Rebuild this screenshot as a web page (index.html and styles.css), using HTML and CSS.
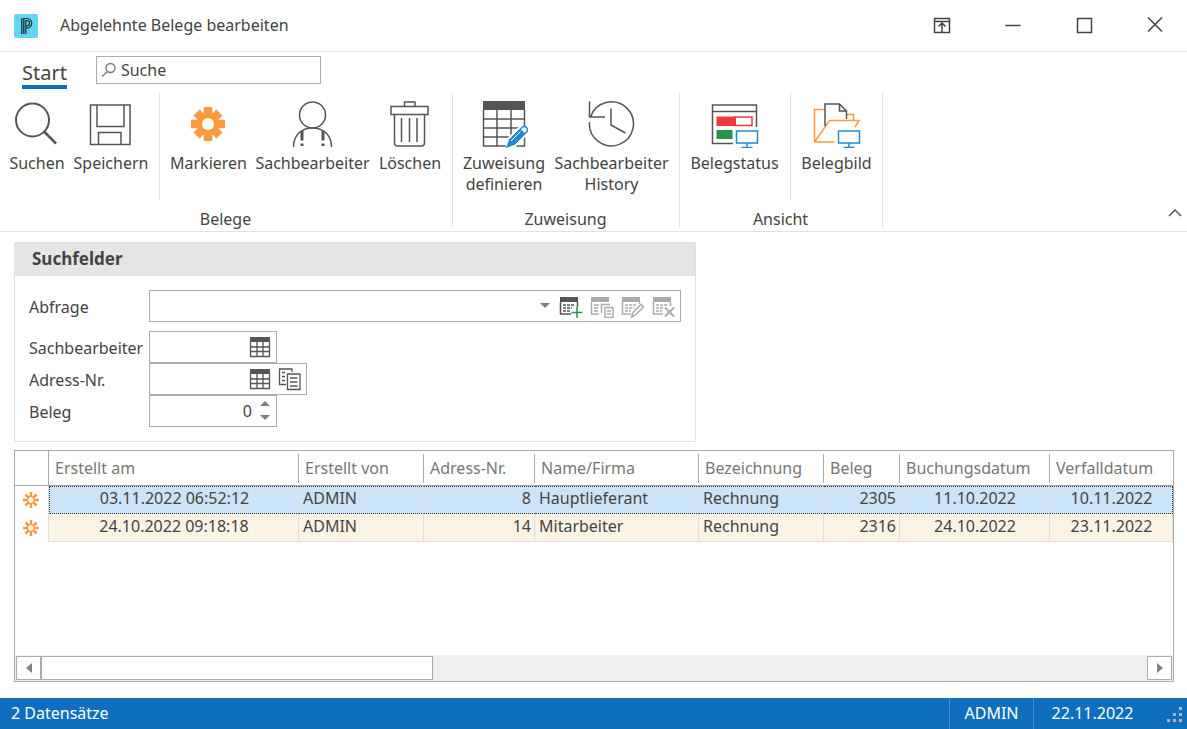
FILE: index.html
```html
<!DOCTYPE html>
<html lang="de">
<head>
    <meta charset="UTF-8">
    <meta name="viewport" content="width=device-width, initial-scale=1">
    <title>Abgelehnte Belege bearbeiten</title>
    <link rel="stylesheet" href="styles.css">
</head>
<body>
<header class="titlebar">
    <svg class="logo" viewBox="0 0 24 24">
        <rect width="24" height="24" rx="2" fill="#62d5f2"/>
        <path d="M7.8 4v16M9.8 4v16" stroke="#1d3038" stroke-width="1.3"/>
        <path d="M9.8 4.5H13a4.8 4.8 0 0 1 0 9.6h-1.2M11.8 20V6.7H13a2.6 2.6 0 0 1 0 5.2h-1" fill="none" stroke="#1d3038" stroke-width="1.2"/>
    </svg>
    <h1>Abgelehnte Belege bearbeiten</h1>
    <div class="window-buttons">
        <button type="button" aria-label="Menüband-Anzeige"><svg viewBox="0 0 18 18"><path d="M1.5 1.5h15v14h-15zM1.5 4.5h15M9 15V6.5M5.5 9.5L9 6l3.5 3.5"/></svg></button>
        <button type="button" aria-label="Minimieren"><svg viewBox="0 0 18 18"><path d="M1.5 8.5h15"/></svg></button>
        <button type="button" aria-label="Maximieren"><svg viewBox="0 0 18 18"><path d="M2.5 1.5h14v14h-14z"/></svg></button>
        <button type="button" aria-label="Schließen"><svg viewBox="0 0 18 18"><path d="M2 .5l14 14M16 .5l-14 14"/></svg></button>
    </div>
</header>

<nav class="tabs">
    <a class="tab" href="#start">Start</a>
    <label class="search">
        <svg viewBox="0 0 16 16"><circle cx="9.5" cy="6" r="4.500"/><path d="M6.500 9.500L1 14.500"/></svg>
        <input type="text" value="Suche" aria-label="Suche">
    </label>
</nav>

<section class="ribbon" id="start">
    <div class="group group-belege">
        <div class="tools">
            <button type="button" class="tool">
                <svg viewBox="0 0 48 48" class="line"><circle cx="19.5" cy="20" r="16.5" stroke-width="2"/><path d="M31 31.500l12 12" stroke-width="2.5"/></svg>
                <span>Suchen</span>
            </button>
            <button type="button" class="tool">
                <svg viewBox="0 0 48 48" class="line"><path d="M3.500 5H43v39.500H3.500zM10 5v21.500h27V5M11.500 44.500V32.500h22.500v12"/></svg>
                <span>Speichern</span>
            </button>
            <i class="divider"></i>
            <button type="button" class="tool">
                <svg viewBox="0 0 48 48">
                    <g stroke="#fd9a3c" stroke-width="8.5"><path d="M23 7v34M6 24h34M11.500 12.500l23 23M34.500 12.500l-23 23"/></g>
                    <circle cx="23" cy="24" r="11.500" fill="#fd9a3c"/><circle cx="23" cy="24" r="6" fill="#fff"/>
                </svg>
                <span>Markieren</span>
            </button>
            <button type="button" class="tool">
                <svg viewBox="0 0 48 48" class="line"><circle cx="23.5" cy="15" r="13"/><path d="M4.500 47C4.500 35 12.500 28 23.500 28S42.500 35 42.500 47"/><path d="M13 31v9.500M13 43.500V46M34 31v9.500M34 43.500V46" stroke-width="3"/></svg>
                <span>Sachbearbeiter</span>
            </button>
            <button type="button" class="tool">
                <svg viewBox="0 0 48 48" class="line"><path d="M5 6.500h37v8H5zM18.500 6.500V2H29v4.500M8.500 14.500V43q0 3 3 3h24q3 0 3-3V14.500M15.500 18v24M23.500 18v24M31 18v24"/></svg>
                <span>Löschen</span>
            </button>
        </div>
        <div class="caption">Belege</div>
    </div>
    <div class="group group-zuweisung">
        <div class="tools">
            <button type="button" class="tool">
                <svg viewBox="0 0 48 48" class="line">
                    <path d="M3 1h42v9H3z" fill="#555553" stroke="none"/>
                    <path d="M3.500 10v36H44.500V10M17 10v36M31 10v36M3.500 19h41M3.500 28h41M3.500 37h41"/>
                    <path d="M27 47L46 28" stroke="#fff" stroke-width="12"/>
                    <g stroke="#1e8bcf"><path d="M29 40.500L42.500 27q2-1.500 4 .5t.5 4L33.500 45M40 29.500l4.500 4.500"/><path d="M29 40L40 29l5 5-11 11-8 3z" fill="#1e8bcf" stroke="none"/><path d="M31 41l9.500-9.500" stroke="#fff" stroke-width="1"/></g>
                </svg>
                <span>Zuweisung definieren</span>
            </button>
            <button type="button" class="tool">
                <svg viewBox="0 0 48 48" class="line"><path d="M1.500 22A22 22 0 1 0 2.500 17M1.500 1.500V17h15.500M23 8.500V25L37.500 33"/></svg>
                <span>Sachbearbeiter History</span>
            </button>
        </div>
        <div class="caption">Zuweisung</div>
    </div>
    <div class="group group-ansicht">
        <div class="tools">
            <button type="button" class="tool">
                <svg viewBox="0 0 48 48" class="line">
                    <path d="M45.500 27V5h-44v38.500H22M1.500 11.500h44"/>
                    <path d="M24 17h17v8.500H24z" stroke="#ee3a39"/><path d="M5.500 16.500H25v9.500H5.500z" fill="#ee3a39" stroke="none"/>
                    <path d="M5.500 30h16v9h-16z" fill="#2b9348" stroke="none"/>
                    <path d="M25.500 31h21v12h-21zM36 43v4.500M30.500 47.500h11" stroke="#1e8bcf"/>
                </svg>
                <span>Belegstatus</span>
            </button>
            <i class="divider"></i>
            <button type="button" class="tool">
                <svg viewBox="0 0 48 48" class="line">
                    <path d="M12 9.500H1.500V42H21.500M1.500 42L16.500 20.500h29.500L42 27M34 14.500h6.500v6" stroke="#fd9a3c"/>
                    <path d="M12 26V4h14.500l7 7v8M26.500 4v7h7"/>
                    <path d="M25.500 31h21v12h-21zM36 43v4.500M30.500 47.500h11" stroke="#1e8bcf"/>
                </svg>
                <span>Belegbild</span>
            </button>
        </div>
        <div class="caption">Ansicht</div>
    </div>
    <button type="button" class="collapse" aria-label="Menüband reduzieren"><svg viewBox="0 0 14 10"><path d="M1 8l6-6 6 6"/></svg></button>
</section>

<main>
    <form class="panel">
        <h2>Suchfelder</h2>
        <div class="fields">
            <label for="abfrage">Abfrage</label>
            <div class="field field-query">
                <input type="text" id="abfrage">
                <button type="button" class="arrow" aria-label="Auswählen"><svg viewBox="0 0 10 6"><path d="M0 0h10L5 5z" fill="#808080"/></svg></button>
                <button type="button" aria-label="Neue Abfrage"><svg viewBox="0 0 24 24">
                    <path d="M1 3h18v5H1z" fill="#555553"/><path d="M1.500 8v12H12M18.500 8v5" fill="none" stroke="#555553" stroke-width="1.5"/>
                    <path d="M4 11h12M4 14h9M4 17h8" stroke="#555553" stroke-width="1.5" stroke-dasharray="3 1"/>
                    <path d="M18 13v11M12.500 18.500h11" stroke="#2b9348" stroke-width="1.5"/>
                </svg></button>
                <button type="button" aria-label="Abfrage kopieren"><svg viewBox="0 0 24 24">
                    <path d="M1 3h18v5H1z" fill="#aaa"/><path d="M1.500 8v12H9M4 11h5M4 14h4M4 17h4" fill="none" stroke="#aaa" stroke-width="1.5"/>
                    <path d="M11.500 19V10.500H20M15 13.500h8v10h-8zM17 17h4M17 20h4" fill="none" stroke="#aaa" stroke-width="1.5"/>
                </svg></button>
                <button type="button" aria-label="Abfrage bearbeiten"><svg viewBox="0 0 24 24">
                    <path d="M1 3h18v5H1z" fill="#aaa"/><path d="M1.500 8v12H10M18.500 8v2" fill="none" stroke="#aaa" stroke-width="1.5"/>
                    <path d="M4 11h12M4 14h9M4 17h6" stroke="#aaa" stroke-width="1.5" stroke-dasharray="3 1"/>
                    <path d="M10.500 23l1.500-4.500 8-8 2.500 2.500-8 8z" fill="#fff" stroke="#aaa" stroke-width="1.5"/>
                </svg></button>
                <button type="button" aria-label="Abfrage löschen"><svg viewBox="0 0 24 24">
                    <path d="M1 3h18v5H1z" fill="#aaa"/><path d="M1.500 8v12H11M18.500 8v4" fill="none" stroke="#aaa" stroke-width="1.5"/>
                    <path d="M4 11h12M4 14h7M4 17h6" stroke="#aaa" stroke-width="1.5" stroke-dasharray="3 1"/>
                    <path d="M13 13.500l9 9M22 13.500l-9 9" stroke="#aaa" stroke-width="2"/>
                </svg></button>
            </div>

            <label for="sachbearbeiter">Sachbearbeiter</label>
            <div class="field field-short">
                <input type="text" id="sachbearbeiter">
                <button type="button" aria-label="Sachbearbeiter wählen"><svg viewBox="0 0 24 24"><path d="M2 2h20v5H2z" fill="#555553"/><path d="M2.500 7v14.500h19V7M9 7v14M15 7v14M2 12h20M2 16.500h20" fill="none" stroke="#555553" stroke-width="1.300"/></svg></button>
            </div>

            <label for="adresse">Adress-Nr.</label>
            <div class="field field-long">
                <input type="text" id="adresse">
                <button type="button" aria-label="Adresse wählen"><svg viewBox="0 0 24 24"><path d="M2 2h20v5H2z" fill="#555553"/><path d="M2.500 7v14.500h19V7M9 7v14M15 7v14M2 12h20M2 16.500h20" fill="none" stroke="#555553" stroke-width="1.300"/></svg></button>
                <button type="button" aria-label="Adresse anzeigen"><svg viewBox="0 0 24 24"><path d="M8 17.500H1.500V2H14v3M9.500 7H22v15.500H9.500zM12 11h7.500M12 15h7.500M12 19h7.500M4 5.500h3M4 9.500h3M4 13.500h3" fill="none" stroke="#555553" stroke-width="1.300"/></svg></button>
            </div>

            <label for="beleg">Beleg</label>
            <div class="field field-short">
                <input type="text" id="beleg" class="number" value="0" inputmode="numeric">
                <span class="spin">
                    <button type="button" aria-label="Erhöhen"><svg viewBox="0 0 10 6"><path d="M0 5h10L5 0z" fill="#808080"/></svg></button>
                    <button type="button" aria-label="Verringern"><svg viewBox="0 0 10 6"><path d="M0 0h10L5 5z" fill="#808080"/></svg></button>
                </span>
            </div>
        </div>
    </form>

    <section class="grid">
        <table>
            <colgroup>
                <col class="c-mark"><col class="c-created"><col class="c-user"><col class="c-address"><col class="c-name"><col class="c-type"><col class="c-doc"><col class="c-booked"><col>
            </colgroup>
            <thead>
            <tr>
                <td></td>
                <th><span>Erstellt am</span></th>
                <th><span>Erstellt von</span></th>
                <th><span>Adress-Nr.</span></th>
                <th><span>Name/Firma</span></th>
                <th><span>Bezeichnung</span></th>
                <th><span>Beleg</span></th>
                <th><span>Buchungsdatum</span></th>
                <th><span>Verfalldatum</span></th>
            </tr>
            </thead>
            <tbody>
            <tr class="selected">
                <td class="mark"><svg viewBox="0 0 18 18"><path d="M9 1v5M9 12v5M1 9h5M12 9h5M3.500 3.500L7 7M11 11l3.500 3.500M14.500 3.500L11 7M7 11l-3.500 3.500"/><circle cx="9" cy="9" r="3.500"/></svg></td>
                <td class="date">03.11.2022 06:52:12</td>
                <td>ADMIN</td>
                <td class="num">8</td>
                <td>Hauptlieferant</td>
                <td>Rechnung</td>
                <td class="num">2305</td>
                <td class="date">11.10.2022</td>
                <td class="date">10.11.2022</td>
            </tr>
            <tr>
                <td class="mark"><svg viewBox="0 0 18 18"><path d="M9 1v5M9 12v5M1 9h5M12 9h5M3.500 3.500L7 7M11 11l3.500 3.500M14.500 3.500L11 7M7 11l-3.500 3.500"/><circle cx="9" cy="9" r="3.500"/></svg></td>
                <td class="date">24.10.2022 09:18:18</td>
                <td>ADMIN</td>
                <td class="num">14</td>
                <td>Mitarbeiter</td>
                <td>Rechnung</td>
                <td class="num">2316</td>
                <td class="date">24.10.2022</td>
                <td class="date">23.11.2022</td>
            </tr>
            </tbody>
        </table>
        <div class="scrollbar">
            <button type="button" aria-label="Nach links"><svg viewBox="0 0 6 10"><path d="M6 0v10L0 5z" fill="#808080"/></svg></button>
            <div class="track"><div class="thumb"></div></div>
            <button type="button" aria-label="Nach rechts"><svg viewBox="0 0 6 10"><path d="M0 0v10l6-5z" fill="#808080"/></svg></button>
        </div>
    </section>
</main>

<footer class="statusbar">
    <span class="count">2 Datensätze</span>
    <span class="cell cell-user">ADMIN</span>
    <span class="cell cell-date">22.11.2022</span>
    <svg class="grip" viewBox="0 0 16 16"><path d="M13 1h3v3h-3zM13 7h3v3h-3zM7 7h3v3H7zM13 13h3v3h-3zM7 13h3v3H7zM1 13h3v3H1z" fill="#b0b4b8"/></svg>
</footer>
</body>
</html>
```
FILE: styles.css
```css
* {
    box-sizing: border-box;
}
body {
    margin: 0;
    min-height: 100vh;
    display: flex;
    flex-direction: column;
    font: 16px/21px "Noto Sans", sans-serif;
    color: #444;
    background: #fff;
}
button, input {
    font: inherit;
    color: inherit;
    margin: 0;
    padding: 0;
    border: 0;
    background: none;
}
svg {
    display: block;
    flex: none;
}

/* title bar */
.titlebar {
    display: flex;
    align-items: center;
    height: 52px;
    padding-left: 14px;
    border-bottom: 1px solid #e1e1e1;
}
.logo {
    width: 24px;
    height: 24px;
}
h1 {
    flex: 1;
    margin: 0 0 0 22px;
    font-size: 16px;
    font-weight: 400;
}
.window-buttons {
    display: flex;
    gap: 7px;
}
.window-buttons button {
    width: 64px;
    height: 48px;
    display: flex;
    align-items: center;
    justify-content: center;
}
.window-buttons svg {
    width: 18px;
    height: 18px;
    fill: none;
    stroke: #444;
    stroke-width: 1.5;
}

/* tabs */
.tabs {
    display: flex;
    align-items: flex-start;
    gap: 29px;
    height: 41px;
    padding: 4px 22px 0;
}
.tab {
    margin-top: 5px;
    height: 28px;
    font-size: 20px;
    line-height: 24px;
    color: #444;
    text-decoration: none;
    border-bottom: 4px solid #106ebe;
}
.search {
    display: flex;
    align-items: center;
    width: 225px;
    height: 28px;
    padding: 0 4px;
    border: 1px solid #ababab;
}
.search svg {
    width: 16px;
    height: 16px;
    fill: none;
    stroke: #777;
    stroke-width: 1.4;
}
.search input {
    flex: 1;
    min-width: 0;
    margin-left: 4px;
}

/* ribbon */
.ribbon {
    display: flex;
    height: 139px;
    border-bottom: 1px solid #e1e1e1;
}
.group {
    display: flex;
    flex-direction: column;
    height: 134px;
    padding: 0 6px 0 5px;
    border-right: 1px solid #e1e1e1;
}
.tools {
    display: grid;
    flex: 1;
}
.group-belege .tools {
    grid-template-columns: 64px 84px 13px 85px 123px 72px;
}
.group-zuweisung .tools {
    grid-template-columns: 92px 123px;
}
.group-ansicht .tools {
    grid-template-columns: 99px 13px 79px;
}
.tool {
    display: flex;
    flex-direction: column;
    align-items: center;
    padding-top: 7px;
}
.tool svg {
    width: 48px;
    height: 48px;
    margin-bottom: 5px;
}
.line {
    fill: none;
    stroke: #555553;
    stroke-width: 1.5;
}
.divider {
    justify-self: center;
    width: 1px;
    height: 107px;
    background: #e1e1e1;
}
.caption {
    height: 20px;
    line-height: 25px;
    text-align: center;
}
.collapse {
    align-self: flex-end;
    margin: 0 5px 13px auto;
}
.collapse svg {
    width: 14px;
    height: 10px;
    fill: none;
    stroke: #555;
    stroke-width: 1.5;
}

main {
    display: flex;
    flex: 1;
    flex-direction: column;
    gap: 8px;
    padding: 10px 13px 16px 14px;
}

/* search panel */
.panel {
    width: 100%;
    max-width: 682px;
    border: 1px solid #e1e1e1;
}
h2 {
    margin: 0;
    padding: 0 17px;
    font-size: 17px;
    line-height: 32px;
    background: #e5e5e5;
    border-bottom: 1px solid #e1e1e1;
}
.fields {
    display: grid;
    grid-template-columns: 120px 1fr;
    padding: 14px;
}
.fields label {
    line-height: 34px;
}
.field {
    display: flex;
    align-items: center;
    gap: 6px;
    height: 32px;
    padding-right: 4px;
    border: 1px solid #ababab;
}
.fields label {
    height: 32px;
}
.field input {
    flex: 1;
    min-width: 0;
    height: 28px;
    padding-left: 4px;
}
.field svg {
    width: 24px;
    height: 24px;
}
.field .arrow svg, .spin svg {
    width: 10px;
    height: 6px;
}
.field .arrow {
    margin-right: 2px;
}
.field-query {
    gap: 7px;
    margin-bottom: 9px;
}
.field-short {
    width: 128px;
}
.field-long {
    width: 158px;
}
.field .number {
    text-align: right;
}
.spin {
    display: flex;
    flex-direction: column;
    gap: 8px;
    padding: 0 2px;
}

/* data grid */
.grid {
    display: flex;
    flex: 1;
    flex-direction: column;
    min-height: 232px;
    border: 1px solid #ababab;
}
table {
    width: 100%;
    table-layout: fixed;
    border-collapse: separate;
    border-spacing: 0;
}
.c-mark { width: 34px; }
.c-created { width: 250px; }
.c-user { width: 125px; }
.c-address { width: 111px; }
.c-name { width: 164px; }
.c-type { width: 125px; }
.c-doc { width: 76px; }
.c-booked { width: 150px; }
th, td {
    padding: 0;
    white-space: nowrap;
}
th, thead td {
    height: 35px;
    font-weight: 400;
    text-align: left;
    color: #777;
    border-bottom: 1px solid #ababab;
}
thead td {
    border-right: 1px solid #ababab;
}
th span {
    display: block;
    padding: 4px 6px;
    border-right: 1px solid #ababab;
}
th:last-child span {
    border-right: 0;
}
tbody td {
    height: 28px;
    padding: 0 3px 2px 4px;
    background: #fbf3e4;
    border-right: 1px solid #dedede;
    border-bottom: 1px solid #dedede;
}
.selected td {
    padding-bottom: 3px;
    background: #cce4f7;
    border-top: 1px dotted #333;
    border-bottom: 1px dotted #333;
}
tbody .mark {
    padding: 0 0 0 7px;
    background: #fff;
    border-top: 0;
    border-bottom: 0;
}
.selected td:nth-child(2) {
    border-left: 1px dotted #333;
}
.selected td:last-child {
    border-right: 1px dotted #333;
}
.mark svg {
    width: 18px;
    height: 18px;
    fill: none;
    stroke: #fd9a3c;
    stroke-width: 2.5;
}
.mark circle {
    stroke-width: 1;
}
.date {
    text-align: center;
}
.num {
    text-align: right;
}
.scrollbar {
    display: flex;
    height: 26px;
    margin-top: auto;
    padding: 1px;
    background: #efefef;
}
.scrollbar button {
    display: flex;
    align-items: center;
    justify-content: center;
    width: 25px;
    background: #fff;
    border: 1px solid #ababab;
}
.scrollbar svg {
    width: 6px;
    height: 10px;
}
.track {
    flex: 1;
}
.thumb {
    width: 392px;
    height: 24px;
    background: #fff;
    border: 1px solid #ababab;
}

/* status bar */
.statusbar {
    display: flex;
    align-items: center;
    height: 31px;
    padding: 0 5px 0 11px;
    line-height: 31px;
    color: #fff;
    background: #106ebe;
}
.count {
    flex: 1;
}
.cell {
    text-align: center;
    border-left: 1px solid #4a90cf;
}
.cell-user {
    width: 84px;
}
.cell-date {
    width: 118px;
}
.grip {
    width: 16px;
    height: 16px;
    margin-left: 15px;
}
```
